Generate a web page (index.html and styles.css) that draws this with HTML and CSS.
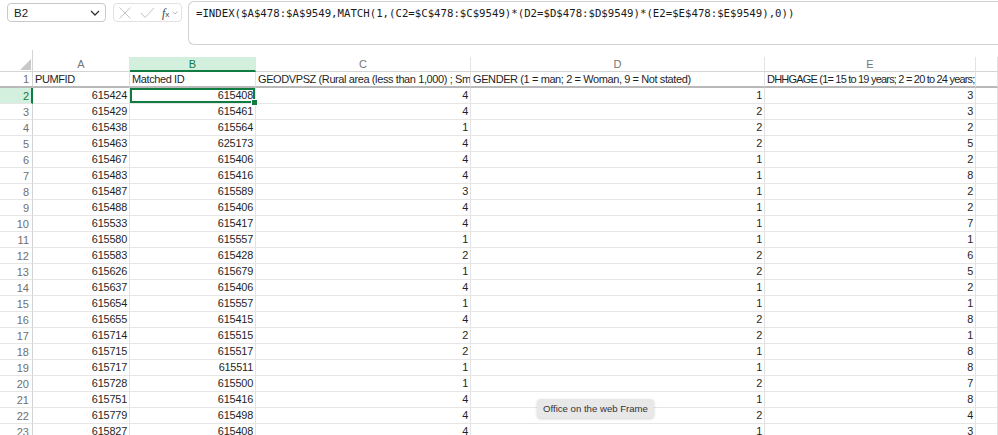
FILE: index.html
```html
<!DOCTYPE html>
<html>
<head>
<meta charset="utf-8">
<link rel="stylesheet" href="styles.css">
</head>
<body>
<div class="app">
  <div class="topbar">
    <div class="namebox">
      <span>B2</span>
      <svg class="chev" width="10" height="6" viewBox="0 0 10 6"><path d="M1 1 L5 5 L9 1" fill="none" stroke="#333" stroke-width="1.3"/></svg>
    </div>
    <div class="btnbox">
      <svg width="14" height="14" viewBox="0 0 14 14"><path d="M1.5 1.5 L12.5 12.5 M12.5 1.5 L1.5 12.5" stroke="#c4c4c4" stroke-width="1"/></svg>
      <svg width="15" height="12" viewBox="0 0 15 12"><path d="M1 6 L5 10.5 L14 1" fill="none" stroke="#c4c4c4" stroke-width="1"/></svg>
      <span class="fx"><i>f</i><sub>x</sub></span>
      <svg class="mini" width="6" height="4" viewBox="0 0 6 4"><path d="M0.5 0.5 L3 3 L5.5 0.5" fill="none" stroke="#b0b0b0" stroke-width="0.9"/></svg>
    </div>
    <div class="formula">=INDEX($A$478:$A$9549,MATCH(1,(C2=$C$478:$C$9549)*(D2=$D$478:$D$9549)*(E2=$E$478:$E$9549),0))</div>
  </div>

  <div class="sheet" id="sheet">
    <div class="corner"><svg width="11" height="11" viewBox="0 0 11 11"><path d="M11 0 L11 11 L0 11 Z" fill="#c9c9c9"/></svg></div>
    <div class="ch">A</div>
    <div class="ch sel">B</div>
    <div class="ch">C</div>
    <div class="ch">D</div>
    <div class="ch">E</div>
    <div class="ch"></div>

    <div class="rh r1">1</div>
    <div class="c r1 t">PUMFID</div>
    <div class="c r1 t">Matched ID</div>
    <div class="c r1 t">GEODVPSZ (Rural area (less than 1,000) ; Small population centre (1,000 to 29,999)</div>
    <div class="c r1 t">GENDER (1 = man; 2 = Woman, 9 = Not stated)</div>
    <div class="c r1 t tight">DHHGAGE (1= 15 to 19 years; 2 = 20 to 24 years; 3 = 25 to 29 years</div>
    <div class="c r1"></div>
  </div>
  <div class="tooltip">Office on the web Frame</div>
</div>
<script>
const rows = [
[2,615424,615408,4,1,3],[3,615429,615461,4,2,3],[4,615438,615564,1,2,2],[5,615463,625173,4,2,5],
[6,615467,615406,4,1,2],[7,615483,615416,4,1,8],[8,615487,615589,3,1,2],[9,615488,615406,4,1,2],
[10,615533,615417,4,1,7],[11,615580,615557,1,1,1],[12,615583,615428,2,2,6],[13,615626,615679,1,2,5],
[14,615637,615406,4,1,2],[15,615654,615557,1,1,1],[16,615655,615415,4,2,8],[17,615714,615515,2,2,1],
[18,615715,615517,2,1,8],[19,615717,615511,1,1,8],[20,615728,615500,1,2,7],[21,615751,615416,4,1,8],
[22,615779,615498,4,2,4],[23,615827,615408,4,1,3]];
const sheet = document.getElementById('sheet');
let html = '';
for (const r of rows) {
  const s = r[0] === 2;
  html += '<div class="rh' + (s ? ' sel' : '') + '">' + r[0] + '</div>';
  for (let i = 1; i <= 5; i++) {
    html += '<div class="c n' + (s && i === 2 ? ' active' : '') + '">' + r[i] + '</div>';
  }
  html += '<div class="c"></div>';
}
sheet.insertAdjacentHTML('beforeend', html);
</script>
</body>
</html>
```

FILE: styles.css
```css
* { box-sizing: border-box; }
html, body { margin: 0; padding: 0; background: #fff; }
body { width: 998px; height: 435px; overflow: hidden; font-family: "Liberation Sans", Arial, sans-serif; color: #1f1f1f; }
.app { position: relative; width: 998px; height: 435px; overflow: hidden; }

.topbar { display: flex; align-items: flex-start; height: 46px; padding-left: 7px; }
.namebox { margin-top: 3px; width: 99px; height: 19px; border: 1px solid #c9c9c9; border-radius: 4px; display: flex; align-items: center; justify-content: space-between; padding: 0 5px 0 6px; font-size: 11.5px; color: #222; }
.btnbox { margin-top: 3px; margin-left: 7px; width: 69px; height: 19px; border: 1px solid #e2e2e2; border-radius: 4px; display: flex; align-items: center; padding-left: 4px; gap: 8px; }
.fx { font-family: "Liberation Serif", serif; font-size: 12px; color: #444; line-height: 1; display: inline-flex; align-items: baseline; margin-left: -1px; }
.fx i { font-style: italic; }
.fx sub { font-size: 8px; font-family: "Liberation Sans", sans-serif; vertical-align: -2px; margin-left: 0; }
.mini { margin-left: -5px; }
.formula { margin-left: 6px; margin-top: 1px; flex: 1; height: 44px; border: 1px solid #d2d2d2; border-right: none; border-radius: 6px 0 0 6px; padding: 5px 0 0 7px; font-family: "DejaVu Sans Mono", "Liberation Mono", monospace; font-size: 10.7px; color: #1a1a1a; white-space: nowrap; overflow: hidden; line-height: 14px; }

.sheet { margin-top: 11px; display: grid; grid-template-columns: 33px 97px 126px 215px 294px 211px 1fr; grid-template-rows: 15px 16px; grid-auto-rows: 16px; font-size: 11px; }
.corner { position: relative; border-right: 1px solid #d4d4d4; border-bottom: 1px solid #d4d4d4; display: flex; align-items: flex-end; justify-content: flex-end; padding: 0 1px 1px 0; }
.corner::before { content: ""; position: absolute; right: -1px; top: -7px; height: 7px; border-right: 1px solid #d4d4d4; }
.ch { border-right: 1px solid #e3e3e3; border-bottom: 1px solid #d4d4d4; text-align: center; color: #767676; font-size: 11px; line-height: 14px; }
.ch.sel { background: #d3f0df; color: #107c41; border-bottom: 2px solid #107c41; line-height: 14px; }
.rh { border-right: 1px solid #d4d4d4; border-bottom: 1px solid #e6e6e6; text-align: right; padding-right: 3px; color: #6f6f6f; font-size: 11px; line-height: 16px; }
.rh.sel { background: #d3f0df; color: #107c41; border-right: 2px solid #107c41; padding-right: 2px; }
.c { border-right: 1px solid #e3e3e3; border-bottom: 1px solid #e6e6e6; white-space: nowrap; overflow: hidden; line-height: 15px; padding: 0 2px; color: #1f1f1f; }
.r1 { border-bottom: 2px solid #b9b9b9; line-height: 14px; }
.rh.r1 { line-height: 14px; }
.t { letter-spacing: -0.4px; padding-left: 2px; }
.t.tight { letter-spacing: -0.8px; }
.n { text-align: right; letter-spacing: -0.2px; font-size: 10.9px; }
.active { position: relative; box-shadow: inset 0 0 0 2px #107c41; overflow: visible; }
.active::after { content: ""; position: absolute; right: -3px; bottom: -3px; width: 5px; height: 5px; background: #107c41; border: 1px solid #fff; }

.tooltip { position: absolute; left: 537px; top: 399px; width: 117px; height: 19px; background: #e8e8e8; border-radius: 4px; box-shadow: 0 1px 3px rgba(0,0,0,0.18); font-family: "Liberation Sans", sans-serif; font-size: 9.6px; color: #333; display: flex; align-items: center; justify-content: center; }
```
